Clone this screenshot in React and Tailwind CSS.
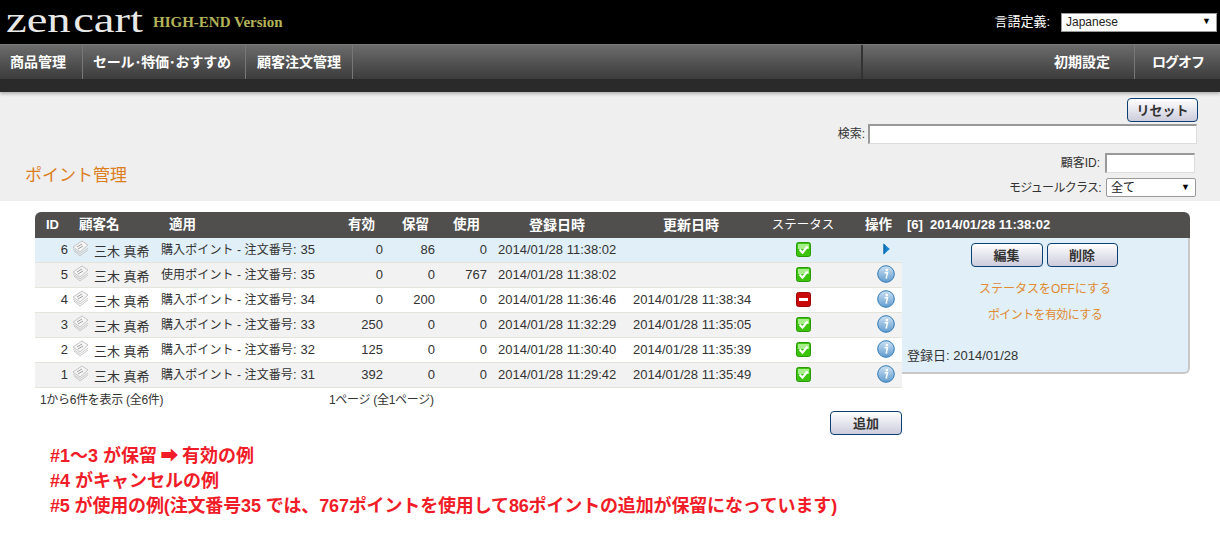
const rows = [
  { id: 6, kind: "購入", order: 35, a: 0, h: 86, u: 0, c: "2014/01/28 11:38:02", m: "", st: "ok", sel: true, bg: "bg-[#e1eff8]" },
  { id: 5, kind: "使用", order: 35, a: 0, h: 0, u: 767, c: "2014/01/28 11:38:02", m: "", st: "ok", bg: "bg-[#f2f2f2]" },
  { id: 4, kind: "購入", order: 34, a: 0, h: 200, u: 0, c: "2014/01/28 11:36:46", m: "2014/01/28 11:38:34", st: "no", bg: "bg-white" },
  { id: 3, kind: "購入", order: 33, a: 250, h: 0, u: 0, c: "2014/01/28 11:32:29", m: "2014/01/28 11:35:05", st: "ok", bg: "bg-[#f2f2f2]" },
  { id: 2, kind: "購入", order: 32, a: 125, h: 0, u: 0, c: "2014/01/28 11:30:40", m: "2014/01/28 11:35:39", st: "ok", bg: "bg-white" },
  { id: 1, kind: "購入", order: 31, a: 392, h: 0, u: 0, c: "2014/01/28 11:29:42", m: "2014/01/28 11:35:49", st: "ok", bg: "bg-[#f2f2f2]" },
];

const grid = "grid grid-cols-[33px_93px_175px_47px_52px_52px_135px_138px_86px_56px] items-center";

function Stack() {
  return (
    <svg width="18" height="17" viewBox="0 0 18 17" fill="none" className="-mt-[3px]">
      <path d="M1 7l9-6 6 4-8 7z" fill="#f6f6f6" stroke="#c4c4c4" />
      <path d="M5 7l5-3M6 9l5-3" stroke="#a0a0a0" strokeWidth="1" />
      <path d="M1 9l7 5 8-6M2 11l6 5 8-6" stroke="#c8c8c8" strokeWidth="1" />
    </svg>
  );
}
function Check() {
  return (
    <svg width="15" height="15" viewBox="0 0 15 15" className="-mt-[2px]">
      <rect x="0.5" y="0.5" width="14" height="14" rx="2" fill="#3cc40c" stroke="#2a9a08" />
      <rect x="2" y="2" width="11" height="5" fill="#a6ee8a" />
      <path d="M3.5 7.5l3 3 5-6" fill="none" stroke="#fff" strokeWidth="2.2" />
    </svg>
  );
}
function Minus() {
  return (
    <svg width="15" height="15" viewBox="0 0 15 15" className="-mt-[2px]">
      <rect x="0.5" y="0.5" width="14" height="14" rx="2" fill="#c80a0a" stroke="#a00808" />
      <rect x="3" y="6" width="9" height="3" fill="#fff" />
    </svg>
  );
}
function Info({ id }) {
  return (
    <svg width="18" height="18" viewBox="0 0 18 18" className="-mt-[3px]">
      <defs>
        <linearGradient id={id} x1="0" y1="0" x2="0" y2="1">
          <stop offset="0" stopColor="#cfe2f2" />
          <stop offset="1" stopColor="#5f9bd0" />
        </linearGradient>
      </defs>
      <circle cx="9" cy="9" r="8.3" fill={`url(#${id})`} stroke="#2d78b4" />
      <circle cx="9.8" cy="5" r="1.3" fill="#fff" />
      <path d="M8.6 7.5h1.9l-1.2 5.2h1M7.6 7.7h1.4" fill="none" stroke="#fff" strokeWidth="1.5" />
    </svg>
  );
}
function Arrow() {
  return (
    <svg width="7" height="12" viewBox="0 0 7 12" className="-mt-[2px]">
      <path d="M0.5 0.5L6.8 6L0.5 11.5z" fill="#1583d0" />
      <path d="M0.5 0.5L2.5 2.3V9.7L0.5 11.5z" fill="#0f6db0" />
    </svg>
  );
}
function Btn({ children, w }) {
  return (
    <button className={`h-[24px] ${w} rounded-[4px] border border-[#0c3f73] bg-gradient-to-b from-white to-[#ccccdc] text-[13px] font-bold text-[#333] leading-none`}>
      {children}
    </button>
  );
}

export default function App() {
  return (
    <div className="w-[1220px] h-[534px] overflow-hidden bg-white text-[12px] text-[#333] font-['Liberation_Sans','Noto_Sans_CJK_JP',sans-serif]">
      <header className="h-[44px] bg-black flex items-center justify-between pl-[6px] pr-[3px]">
        <div className="flex items-center h-[44px]">
          <div className="w-[137px] h-[41px] self-start origin-left scale-x-[1.31] flex gap-[2px] text-[35.5px] leading-[41px] text-[#e8e8e8] font-['Liberation_Serif',serif] whitespace-nowrap">
            <span>zen</span>
            <span>cart</span>
          </div>
          <span className="ml-[10px] text-[15px] font-bold text-[#b4b45a] font-['Liberation_Serif',serif] whitespace-nowrap">HIGH-END Version</span>
        </div>
        <div className="flex items-center">
          <span className="text-white text-[13px] mr-[11px]">言語定義:</span>
          <div className="w-[156px] h-[19px] bg-white border border-[#999] flex items-center justify-between pl-[4px] pr-[5px] text-[12px] text-[#222]">
            <span>Japanese</span><span className="text-[9px] text-black">▼</span>
          </div>
        </div>
      </header>

      <nav className="h-[48px] bg-[#2a2a2a] border-t border-[#7a7a7a] shadow-[0_2px_3px_rgba(0,0,0,0.25)] relative">
        <div className="h-[34px] flex bg-gradient-to-b from-[#6c6c6c] to-[#3c3c3c] text-white font-bold text-[14px] items-stretch whitespace-nowrap">
          <div className="w-[83px] pl-[10px] flex items-center border-r border-[#777]">商品管理</div>
          <div className="w-[163px] pl-[10px] flex items-center border-r border-[#777] tracking-[-0.2px]">セール･特価･おすすめ</div>
          <div className="w-[107px] pl-[11px] flex items-center border-r border-[#777]">顧客注文管理</div>
          <div className="w-[510px] border-r-[2px] border-[#333]" />
          <div className="w-[272px] pr-[24px] flex items-center justify-end border-r border-[#777]">初期設定</div>
          <div className="pl-[17px] flex items-center tracking-[-1px]">ログオフ</div>
        </div>
      </nav>

      <section className="h-[109px] bg-[#efefef] flex justify-between items-end pl-[25px] pr-[22px] pb-[4px]">
        <h1 className="text-[17px] text-[#dc7d1e] font-normal mb-[9px]">ポイント管理</h1>
        <div className="flex flex-col items-end">
          <Btn w="w-[71px]">リセット</Btn>
          <div className="flex items-center mt-[2px] mr-[1px]">
            <span className="mr-[3px]">検索:</span>
            <input className="w-[329px] h-[20px] bg-white border border-[#ddd] border-t-[2px] border-l-[2px] border-t-[#999] border-l-[#999]" />
          </div>
          <div className="flex items-center mt-[9px] mr-[3px]">
            <span className="mr-[5px]">顧客ID:</span>
            <input className="w-[90px] h-[20px] bg-white border border-[#ddd] border-t-[2px] border-l-[2px] border-t-[#999] border-l-[#999]" />
          </div>
          <div className="flex items-center mt-[5px] mr-[2px]">
            <span className="mr-[5px] tracking-[-0.7px]">モジュールクラス:</span>
            <div className="w-[90px] h-[19px] bg-white border border-[#999] rounded-[2px] flex items-center justify-between pl-[4px] pr-[5px] text-[#222]">
              <span>全て</span><span className="text-[9px] text-black">▼</span>
            </div>
          </div>
        </div>
      </section>

      <main className="ml-[35px] w-[1155px] mt-[11px]">
        <div className="h-[26px] bg-[#504f4d] rounded-t-[6px] flex items-center text-white font-bold text-[13.5px] whitespace-nowrap">
          <div className={`${grid} w-[867px]`}>
            <div className="pl-[11px] text-[13px]">ID</div>
            <div className="pl-[11px]">顧客名</div>
            <div className="pl-[8px]">適用</div>
            <div className="text-right pr-[8px]">有効</div>
            <div className="text-right pr-[6px]">保留</div>
            <div className="text-right pr-[7px]">使用</div>
            <div className="pl-[42px] text-[14px]">登録日時</div>
            <div className="pl-[41px] text-[14px]">更新日時</div>
            <div className="text-center font-normal text-[12.5px]">ステータス</div>
            <div className="text-right pr-[10px]">操作</div>
          </div>
          <div className="pl-[5px] text-[13px]">[6]&nbsp;&nbsp;2014/01/28 11:38:02</div>
        </div>
        <div className="flex items-start">
          <div className="w-[867px]">
            {rows.map((r) => (
              <div key={r.id} className={`${grid} h-[25px] border-b border-[#e4e4da] text-[13px] ${r.bg}`}>
                <div className="text-right">{r.id}</div>
                <div className="flex items-center pl-[4px] gap-[4px]">
                  <Stack />
                  <span className="pt-[4px]">三木 真希</span>
                </div>
                <div className="whitespace-nowrap text-[12px] tracking-[0.1px]">{r.kind}ポイント - 注文番号<span className="text-[13px]">: {r.order}</span></div>
                <div className="text-right">{r.a}</div>
                <div className="text-right">{r.h}</div>
                <div className="text-right">{r.u}</div>
                <div className="pl-[11px]">{r.c}</div>
                <div className="pl-[11px]">{r.m}</div>
                <div className="flex justify-center">{r.st === "ok" ? <Check /> : <Minus />}</div>
                <div className="flex justify-end pr-[7px]">
                  {r.sel ? <span className="pr-[5px] flex"><Arrow /></span> : <Info id={`info${r.id}`} />}
                </div>
              </div>
            ))}
            <div className="flex mt-[4px] h-[16px] items-center tracking-[-0.3px]">
              <div className="w-[294px] pl-[5px]">1から6件を表示 (全6件)</div>
              <div>1ページ (全1ページ)</div>
            </div>
            <div className="flex justify-end mt-[3px]">
              <Btn w="w-[72px]">追加</Btn>
            </div>
          </div>
          <aside className="w-[288px] h-[136px] bg-[#e1eff8] border-r-[2px] border-b-[2px] border-[#c8c8c8] rounded-br-[6px] flex flex-col">
            <div className="flex justify-center gap-[4px] mt-[5px] mr-[2px]">
              <Btn w="w-[72px]">編集</Btn>
              <Btn w="w-[71px]">削除</Btn>
            </div>
            <div className="text-center text-[#e08a32] mt-[14px] flex flex-col gap-[10px]">
              <div className="leading-[16px]">ステータスをOFFにする</div>
              <div className="leading-[16px] tracking-[-0.6px]">ポイントを有効にする</div>
            </div>
            <div className="mt-auto mb-[7px] pl-[5px] text-[13px]">登録日: 2014/01/28</div>
          </aside>
        </div>
        <div className="mt-[9px] ml-[15px] text-[#f01c28] text-[18px] font-bold leading-[25px] whitespace-nowrap">
          <div>#1～3 が保留<span className="px-[3.5px]">➡</span>有効の例</div>
          <div>#4 がキャンセルの例</div>
          <div className="tracking-[-0.15px]">#5 が使用の例(注文番号35 では、767ポイントを使用して86ポイントの追加が保留になっています)</div>
        </div>
      </main>
    </div>
  );
}
